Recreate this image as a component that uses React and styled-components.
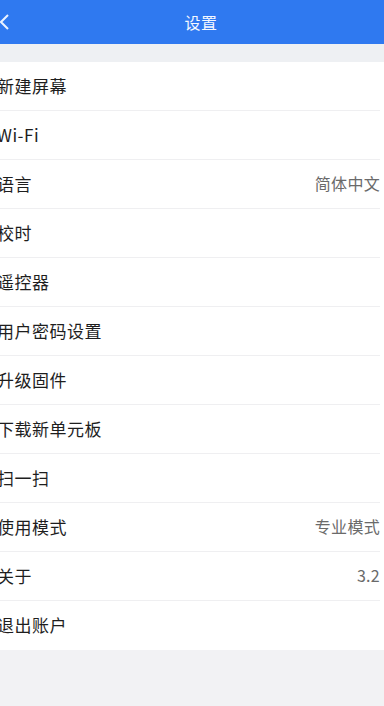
import React from 'react';
import styled, { createGlobalStyle } from 'styled-components';

const GlobalStyle = createGlobalStyle`
  html, body {
    margin: 0;
    padding: 0;
    background: #f2f2f4;
    font-family: "Noto Sans CJK SC", "Noto Sans", sans-serif;
    overflow: hidden;
  }
`;

const Page = styled.div`
  width: 384px;
  height: 706px;
  background: #f2f2f4;
  overflow: hidden;
`;

const Header = styled.header`
  height: 44px;
  background: #2f79f0;
  display: flex;
  align-items: center;
  justify-content: center;
  position: relative;
  color: #f4f8ff;
`;

const BackButton = styled.button`
  position: absolute;
  left: -4px;
  top: 12px;
  width: 16px;
  height: 20px;
  padding: 0;
  border: 0;
  background: none;
  display: flex;
  align-items: center;
  justify-content: center;
`;

const Title = styled.h1`
  margin: 0 0 0 18px;
  font-size: 16px;
  font-weight: 400;
  letter-spacing: 0.5px;
`;

const Spacer = styled.div`
  height: 18px;
  background: #eef0f3;
`;

const List = styled.ul`
  list-style: none;
  margin: 0 0 0 -3px;
  padding: 0 4px 0 0;
  background: #fff;
`;

const Row = styled.li`
  height: 49px;
  box-sizing: border-box;
  display: flex;
  align-items: center;
  justify-content: space-between;
  padding-bottom: 2px;
  border-bottom: ${({ last }) => (last ? 'none' : '1px solid #efeff1')};
  font-size: 17px;
  line-height: 1;
  color: #1e1e1e;
`;

const Label = styled.span`
  letter-spacing: 0.5px;
`;

const Value = styled.span`
  color: #6a6a6a;
  font-size: 16px;
  letter-spacing: 0.3px;
`;

const items = [
  { label: '新建屏幕' },
  { label: 'Wi-Fi' },
  { label: '语言', value: '简体中文' },
  { label: '校时' },
  { label: '遥控器' },
  { label: '用户密码设置' },
  { label: '升级固件' },
  { label: '下载新单元板' },
  { label: '扫一扫' },
  { label: '使用模式', value: '专业模式' },
  { label: '关于', value: '3.2' },
  { label: '退出账户' },
];

const App = () => (
  <Page>
    <GlobalStyle />
    <Header>
      <BackButton>
        <svg width="12" height="18" viewBox="0 0 12 18">
          <path d="M10 2 L3 9 L10 16" fill="none" stroke="#eaf2ff" strokeWidth="2" />
        </svg>
      </BackButton>
      <Title>设置</Title>
    </Header>
    <Spacer />
    <List>
      {items.map((item, i) => (
        <Row key={item.label} last={i === items.length - 1}>
          <Label>{item.label}</Label>
          {item.value && <Value>{item.value}</Value>}
        </Row>
      ))}
    </List>
  </Page>
);

export default App;
